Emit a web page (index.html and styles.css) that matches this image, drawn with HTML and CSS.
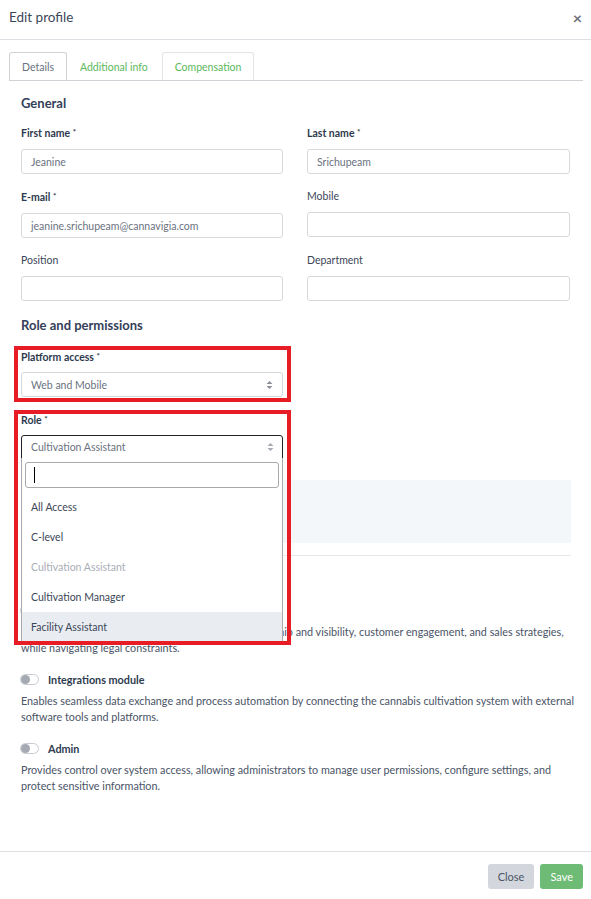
FILE: index.html
```html
<!DOCTYPE html>
<html lang="en">
<head>
  <meta charset="UTF-8">
  <meta name="viewport" content="width=device-width, initial-scale=1.0">
  <title>Edit profile</title>
  <link rel="stylesheet" href="styles.css">
</head>
<body>
  <div class="modal">
    <div class="modal-header">
      <span class="modal-title">Edit profile</span>
      <span class="close-x">&times;</span>
    </div>

    <div class="modal-body">
      <!-- Tabs -->
      <div class="tabs">
        <span class="tab active">Details</span>
        <span class="tab">Additional info</span>
        <span class="tab hover">Compensation</span>
      </div>

      <div class="tab-content">
        <h3 class="section-title">General</h3>
        <div class="form-grid">
          <div class="field">
            <label class="req">First name <sup>*</sup></label>
            <div class="input">Jeanine</div>
          </div>
          <div class="field">
            <label class="req">Last name <sup>*</sup></label>
            <div class="input">Srichupeam</div>
          </div>
          <div class="field">
            <label class="req">E-mail <sup>*</sup></label>
            <div class="input">jeanine.srichupeam@cannavigia.com</div>
          </div>
          <div class="field">
            <label>Mobile</label>
            <div class="input"></div>
          </div>
          <div class="field">
            <label>Position</label>
            <div class="input"></div>
          </div>
          <div class="field">
            <label>Department</label>
            <div class="input"></div>
          </div>
        </div>

        <h3 class="section-title roles">Role and permissions</h3>
        <div class="form-grid">
          <div class="field platform-field">
            <label class="req">Platform access <sup>*</sup></label>
            <div class="input select">
              Web and Mobile
              <svg class="arrows" width="7" height="10" viewBox="0 0 7 10"><path d="M3.5 1 L6.5 4 H0.5 Z M3.5 9 L6.5 6 H0.5 Z" fill="#8a8f98"/></svg>
            </div>
            <div class="marker marker-platform"></div>
          </div>
          <div></div>
          <div class="field role-field">
            <label class="req">Role <sup>*</sup></label>
            <div class="input select open">
              Cultivation Assistant
              <svg class="arrows" width="7" height="10" viewBox="0 0 7 10"><path d="M3.5 1 L6.5 4 H0.5 Z M3.5 9 L6.5 6 H0.5 Z" fill="#a6abb2"/></svg>
            </div>
            <div class="dropdown">
              <div class="search"><span class="caret"></span></div>
              <div class="option">All Access</div>
              <div class="option">C-level</div>
              <div class="option disabled">Cultivation Assistant</div>
              <div class="option">Cultivation Manager</div>
              <div class="option highlighted">Facility Assistant</div>
            </div>
            <div class="marker marker-role"></div>
          </div>
        </div>

        <div class="role-info">
          <p>Assists with daily cultivation tasks.</p>
        </div>
        <hr class="divider">

        <h4 class="modules-title">Modules</h4>
        <div class="module">
          <div class="module-head"><span class="toggle"></span><b>Marketing module</b></div>
          <p>Supports marketing teams with tools for brand ownership and visibility, customer engagement, and sales strategies,<br>while navigating legal constraints.</p>
        </div>
        <div class="module">
          <div class="module-head"><span class="toggle"></span><b>Integrations module</b></div>
          <p>Enables seamless data exchange and process automation by connecting the cannabis cultivation system with external<br>software tools and platforms.</p>
        </div>
        <div class="module">
          <div class="module-head"><span class="toggle"></span><b>Admin</b></div>
          <p>Provides control over system access, allowing administrators to manage user permissions, configure settings, and<br>protect sensitive information.</p>
        </div>
      </div>
    </div>

    <div class="modal-footer">
      <button class="btn btn-close">Close</button>
      <button class="btn btn-save">Save</button>
    </div>
  </div>
</body>
</html>
```

FILE: styles.css
```css
body {
  margin: 0;
  font-family: Lato, "Open Sans", sans-serif;
  color: #3b4657;
  background: #fff;
}
.modal {
  width: 591px;
  height: 899px;
  display: flex;
  flex-direction: column;
  overflow: hidden;
}
.modal-header {
  height: 40px;
  flex: none;
  box-sizing: border-box;
  border-bottom: 1px solid #dcdfe3;
  display: flex;
  align-items: center;
  justify-content: space-between;
  padding: 0 9px 5px 9px;
}
.modal-title {
  font-size: 13.5px;
  color: #3d4758;
}
.close-x {
  font-size: 16px;
  color: #6d717a;
  font-weight: bold;
}
.modal-body {
  flex: 1;
  padding: 12px 8px 0 9px;
}
.tabs {
  display: flex;
  height: 28px;
  border-bottom: 1px solid #cfd3d8;
  font-size: 10.5px;
}
.tab {
  display: flex;
  align-items: center;
  padding: 0 12px;
  color: #5cb85c;
  border: 1px solid transparent;
  border-bottom: none;
  border-radius: 3px 3px 0 0;
}
.tab.active {
  color: #687280;
  border-color: #cfd3d8;
}
.tab.hover {
  border-color: #e1e4e8;
  margin-left: 1px;
}
.tab-content {
  padding: 0 12px;
}
.section-title {
  font-size: 13px;
  font-weight: bold;
  color: #34405a;
  margin: 14px 0 14px 0;
}
.section-title.roles {
  margin: 16px 0 16px 0;
}
.form-grid {
  display: grid;
  grid-template-columns: 262px 263px;
  column-gap: 24px;
  row-gap: 15px;
}
.field {
  position: relative;
}
.field label {
  display: block;
  font-size: 10.5px;
  line-height: 14px;
  margin-bottom: 9px;
  color: #3b4657;
}
.field label.req {
  font-weight: bold;
  color: #2e3a4e;
}
.platform-field label,
.role-field label {
  margin-bottom: 8px;
}
.field sup {
  font-size: 8px;
  vertical-align: 2px;
}
.input {
  height: 25px;
  box-sizing: border-box;
  border: 1px solid #d5d9de;
  border-radius: 3px;
  font-size: 10.5px;
  color: #6b7280;
  padding: 0 9px;
  display: flex;
  align-items: center;
}
.select {
  justify-content: space-between;
}
.select.open {
  border-color: #222;
  height: 24px;
  border-radius: 3px 3px 0 0;
  padding-right: 8px;
}
.arrows {
  flex: none;
}
.dropdown {
  position: absolute;
  left: 0;
  right: 0;
  top: 46px;
  background: #fff;
  border: 1px solid #aaa;
  border-top: none;
  z-index: 2;
}
.search {
  margin: 4px 3px 4px 3px;
  height: 26px;
  box-sizing: border-box;
  border: 1px solid #aaa;
  border-radius: 3px;
  display: flex;
  align-items: center;
  padding-left: 8px;
}
.caret {
  width: 1px;
  height: 16px;
  background: #000;
}
.option {
  height: 30px;
  display: flex;
  align-items: center;
  padding-left: 9px;
  font-size: 10.5px;
  color: #3b4657;
}
.option.disabled {
  color: #a9aeb6;
}
.option.highlighted {
  background: #e9edf1;
  height: 29px;
}
/* red annotation frames */
.marker {
  position: absolute;
  left: -7px;
  right: -8px;
  box-sizing: border-box;
  border: 4px solid #e81c24;
  z-index: 3;
  pointer-events: none;
}
.marker-platform {
  top: -3px;
  bottom: -5px;
}
.marker-role {
  top: -2px;
  height: 235px;
}
.role-info {
  margin-top: 21px;
  background: #f4f7fa;
  height: 63px;
  padding: 0 12px;
  font-size: 10.5px;
  display: flex;
  align-items: center;
}
.divider {
  border: none;
  border-top: 1px solid #e6e9ed;
  margin: 12px 0 0 0;
}
.modules-title {
  font-size: 12px;
  margin: 23px 0 8px 0;
  color: #34405a;
}
.module {
  margin: 0 -12px 15px 0;
}
.module-head {
  display: flex;
  align-items: center;
  gap: 9px;
  height: 16px;
  font-size: 10.8px;
  color: #2e3a4e;
}
.toggle {
  width: 17px;
  height: 9px;
  border: 1px solid #c7cbd1;
  border-radius: 6px;
  position: relative;
  margin-left: -1px;
}
.toggle::before {
  content: "";
  position: absolute;
  left: 0;
  top: 0;
  width: 9px;
  height: 9px;
  border-radius: 50%;
  background: #a5aab2;
}
.module p {
  margin: 6px 0 0 0;
  font-size: 10.8px;
  line-height: 16px;
  color: #4a5466;
  white-space: nowrap;
}
.modal-footer {
  height: 48px;
  flex: none;
  box-sizing: border-box;
  border-top: 1px solid #dcdfe3;
  display: flex;
  justify-content: flex-end;
  align-items: flex-start;
  gap: 6px;
  padding: 12px 8px 0 0;
}
.btn {
  height: 25px;
  border: none;
  border-radius: 3px;
  font-family: Lato, "Open Sans", sans-serif;
  font-size: 11px;
  padding: 0 10px;
}
.btn-close {
  background: #d3d7dd;
  color: #4a5466;
}
.btn-save {
  background: #6dbb74;
  color: #fff;
}
```
